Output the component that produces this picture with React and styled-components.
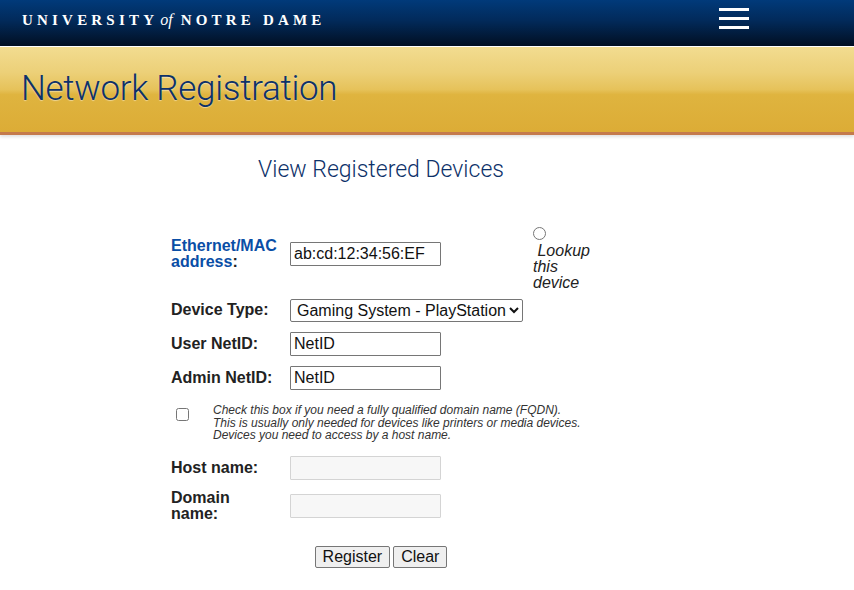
import React from 'react';
import styled, { createGlobalStyle } from 'styled-components';

const GlobalStyle = createGlobalStyle`
    html, body {
        margin: 0;
        padding: 0;
        background: #fff;
    }
    body {
        font-family: "Liberation Sans", Arial, Helvetica, sans-serif;
        color: #222;
    }
`;

const TopBar = styled.header`
    display: flex;
    align-items: center;
    justify-content: space-between;
    height: 46px;
    padding: 0 105px 0 22px;
    background: linear-gradient(to bottom, #013a7a 0%, #022a5a 45%, #010f22 100%);
    border-bottom: 1px solid #fff;
`;

const Wordmark = styled.div`
    font-family: "Liberation Serif", "Times New Roman", serif;
    font-size: 15px;
    font-weight: bold;
    letter-spacing: 4.2px;
    color: #fff;
    margin-top: -6px;

    em {
        font-weight: normal;
        letter-spacing: 0;
        font-size: 16px;
        margin: 0 8px 0 2px;
    }
`;

const MenuButton = styled.button`
    display: flex;
    flex-direction: column;
    gap: 6px;
    width: 30px;
    padding: 0;
    margin-top: -10px;
    border: none;
    background: none;

    span {
        display: block;
        height: 3px;
        background: #fff;
    }
`;

const Banner = styled.div`
    display: flex;
    align-items: center;
    height: 85px;
    padding-left: 21px;
    background: linear-gradient(to bottom, #f2dc90 0%, #ecd078 30%, #e6c25a 50%, #dfb43f 56%, #dcac36 100%);
    border-bottom: 3px solid #c47a4c;
    box-shadow: 0 2px 3px rgba(0, 0, 0, 0.12);
`;

const BannerTitle = styled.h1`
    margin: 0;
    padding-bottom: 2px;
    font-family: Roboto, "Liberation Sans", Arial, sans-serif;
    font-size: 35px;
    font-weight: 300;
    letter-spacing: -0.3px;
    color: #0d3169;
    text-shadow: 0 1px 1px rgba(255, 255, 255, 0.45);
`;

const Content = styled.main`
    width: 762px;
    display: flex;
    flex-direction: column;
    align-items: center;
`;

const PageLink = styled.a`
    display: block;
    margin-top: 21px;
    font-family: Roboto, "Liberation Sans", Arial, sans-serif;
    font-size: 23px;
    font-weight: 300;
    color: #0d3169;
    text-decoration: none;
`;

const Form = styled.form`
    align-self: flex-start;
    margin: 40px 0 0 171px;
    width: 430px;
`;

const Row = styled.div`
    display: grid;
    grid-template-columns: 119px 243px 62px;
    align-items: ${(p) => (p.$top ? 'start' : 'center')};
    height: ${(p) => p.$height}px;
`;

const Label = styled.label`
    max-width: 108px;
    margin-top: ${(p) => p.$offset || 0}px;
    font-size: 16px;
    font-weight: bold;
    line-height: 16px;
    color: #222;

    a {
        color: #0a4ea6;
        text-decoration: none;
    }
`;

const TextInput = styled.input`
    box-sizing: border-box;
    width: 151px;
    height: 24px;
    margin-top: ${(p) => p.$offset || 0}px;
    padding: 1px 3px;
    font-family: "Liberation Sans", Arial, sans-serif;
    font-size: 16px;
    color: #111;
    border: 1px solid ${(p) => (p.disabled ? '#d4d4d4' : '#767676')};
    border-radius: 1px;
    background: ${(p) => (p.disabled ? '#f7f7f7' : '#fff')};
    outline: none;
`;

const Select = styled.select`
    box-sizing: border-box;
    width: 233px;
    height: 23px;
    padding: 0 0 0 2px;
    font-family: "Liberation Sans", Arial, sans-serif;
    font-size: 16px;
    color: #111;
    border: 1px solid #767676;
    border-radius: 2px;
    background: #fff;
`;

const LookupCell = styled.div`
    padding-top: 4px;
    font-size: 16px;
    font-style: italic;
    line-height: 16px;
    color: #222;

    input {
        display: block;
        width: 13px;
        height: 13px;
        margin: 0 0 3px 0;
    }
`;

const CheckRow = styled.div`
    display: grid;
    grid-template-columns: 42px 1fr;
    height: 56px;
    padding-top: 9px;
    box-sizing: border-box;

    input {
        width: 13px;
        height: 13px;
        margin: 4px 0 0 5px;
    }
`;

const Hint = styled.p`
    margin: 0;
    font-size: 12px;
    font-style: italic;
    line-height: 12.5px;
    color: #333;
    white-space: nowrap;
`;

const Actions = styled.div`
    display: flex;
    justify-content: center;
    gap: 3px;
    margin: 19px 0 0;
    width: 420px;
`;

const Button = styled.button`
    height: 22px;
    padding: 0 7px;
    font-family: "Liberation Sans", Arial, sans-serif;
    font-size: 16px;
    color: #111;
    background: #efefef;
    border: 1px solid #767676;
    border-radius: 2px;
`;

const App = () => {
    const [mac, setMac] = React.useState('ab:cd:12:34:56:EF');
    const [userId, setUserId] = React.useState('NetID');
    const [adminId, setAdminId] = React.useState('NetID');
    const [fqdn, setFqdn] = React.useState(false);

    const clear = (e) => {
        e.preventDefault();
        setMac('');
        setUserId('');
        setAdminId('');
        setFqdn(false);
    };

    return (
        <React.Fragment>
            <GlobalStyle />
            <TopBar>
                <Wordmark>UNIVERSITY<em>of</em>NOTRE DAME</Wordmark>
                <MenuButton aria-label="Menu">
                    <span />
                    <span />
                    <span />
                </MenuButton>
            </TopBar>
            <Banner>
                <BannerTitle>Network Registration</BannerTitle>
            </Banner>
            <Content>
                <PageLink href="#">View Registered Devices</PageLink>
                <Form onSubmit={(e) => e.preventDefault()}>
                    <Row $height={70} $top>
                        <Label htmlFor="mac" $offset={15}><a href="#">Ethernet/MAC address</a>:</Label>
                        <TextInput id="mac" $offset={19} value={mac} onChange={(e) => setMac(e.target.value)} />
                        <LookupCell>
                            <input type="radio" name="lookup" />
                            &nbsp;Lookup this device
                        </LookupCell>
                    </Row>
                    <Row $height={34}>
                        <Label htmlFor="type">Device Type:</Label>
                        <Select id="type" defaultValue="ps">
                            <option value="ps">Gaming System - PlayStation</option>
                            <option value="xbox">Gaming System - Xbox</option>
                            <option value="pc">Computer</option>
                        </Select>
                    </Row>
                    <Row $height={34}>
                        <Label htmlFor="user">User NetID:</Label>
                        <TextInput id="user" value={userId} onChange={(e) => setUserId(e.target.value)} />
                    </Row>
                    <Row $height={34}>
                        <Label htmlFor="admin">Admin NetID:</Label>
                        <TextInput id="admin" value={adminId} onChange={(e) => setAdminId(e.target.value)} />
                    </Row>
                    <CheckRow>
                        <input type="checkbox" checked={fqdn} onChange={(e) => setFqdn(e.target.checked)} />
                        <Hint>
                            Check this box if you need a fully qualified domain name (FQDN).<br />
                            This is usually only needed for devices like printers or media devices.<br />
                            Devices you need to access by a host name.
                        </Hint>
                    </CheckRow>
                    <Row $height={34}>
                        <Label htmlFor="host">Host name:</Label>
                        <TextInput id="host" disabled={!fqdn} />
                    </Row>
                    <Row $height={42}>
                        <Label htmlFor="domain">Domain name:</Label>
                        <TextInput id="domain" disabled={!fqdn} />
                    </Row>
                    <Actions>
                        <Button type="submit">Register</Button>
                        <Button onClick={clear}>Clear</Button>
                    </Actions>
                </Form>
            </Content>
        </React.Fragment>
    );
};

export default App;
